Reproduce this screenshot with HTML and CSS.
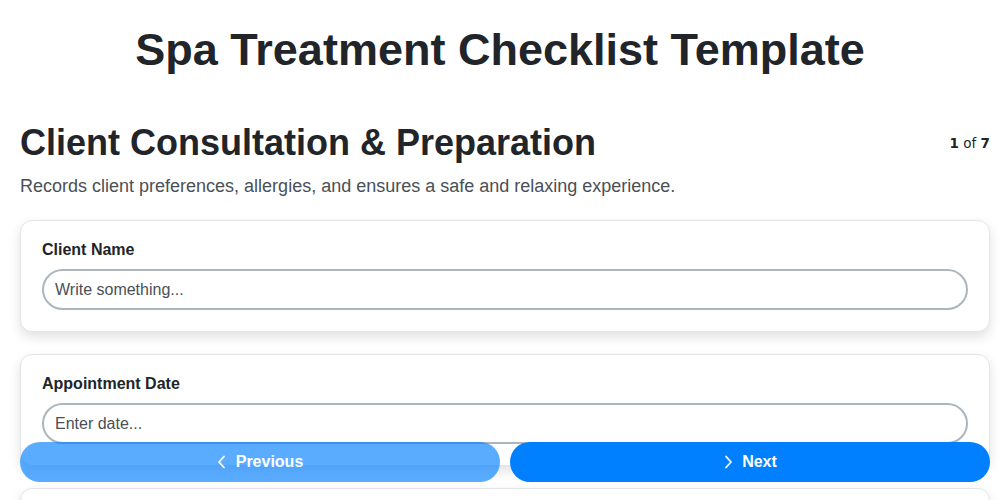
FILE: index.html
```html
<!DOCTYPE html>
<html lang="en">
<head>
<meta charset="utf-8">
<title>Spa Treatment Checklist Template</title>
<link rel="stylesheet" href="styles.css">
</head>
<body>
<h1 class="title">Spa Treatment Checklist Template</h1>
<div class="page">
  <div class="section-head">
    <h2 class="section-title">Client Consultation &amp; Preparation</h2>
    <div class="counter"><b>1</b> of <b>7</b></div>
  </div>
  <p class="desc">Records client preferences, allergies, and ensures a safe and relaxing experience.</p>
  <div class="cards">
    <div class="card">
      <label class="label">Client Name</label>
      <input class="input" type="text" placeholder="Write something...">
    </div>
    <div class="card">
      <label class="label">Appointment Date</label>
      <input class="input" type="text" placeholder="Enter date...">
    </div>
    <div class="card">
      <label class="label">Treatment Type</label>
      <input class="input" type="text" placeholder="Write something...">
    </div>
  </div>
</div>
<div class="nav">
  <button class="btn btn-prev"><svg class="chev" width="10" height="14" viewBox="0 0 10 14"><polyline points="7,1.5 2,7 7,12.5" fill="none" stroke="#fff" stroke-width="1.8" stroke-linecap="round" stroke-linejoin="round"/></svg>Previous</button>
  <button class="btn btn-next"><svg class="chev" width="10" height="14" viewBox="0 0 10 14"><polyline points="3,1.5 8,7 3,12.5" fill="none" stroke="#fff" stroke-width="1.8" stroke-linecap="round" stroke-linejoin="round"/></svg>Next</button>
</div>
</body>
</html>
```

FILE: styles.css
```css
* { box-sizing: border-box; }
html, body { margin: 0; padding: 0; background: #fff; }
body {
  font-family: "Liberation Sans", Arial, sans-serif;
  color: #212529;
  overflow: hidden;
}
.page {
  padding: 0 10px 0 20px;
}
.title {
  margin: 0;
  padding-top: 23px;
  text-align: center;
  font-size: 45px;
  font-weight: 700;
  line-height: 54px;
  color: #212529;
}
.section-head {
  display: flex;
  justify-content: space-between;
  align-items: center;
  margin-top: 44px;
}
.section-title {
  margin: 0;
  font-size: 36px;
  font-weight: 700;
  line-height: 44px;
  color: #212529;
}
.counter {
  font-family: "DejaVu Sans", sans-serif;
  font-size: 13.5px;
  color: #212529;
}
.desc {
  margin: 9px 0 0;
  font-size: 18px;
  line-height: 24px;
  color: #495057;
}
.cards {
  margin-top: 22px;
  display: flex;
  flex-direction: column;
  gap: 22px;
}
.card {
  background: #fff;
  border: 1px solid #e3e5e8;
  border-radius: 12px;
  box-shadow: 0 5px 12px rgba(0, 0, 0, 0.12);
  padding: 19px 21px 21px;
  display: flex;
  flex-direction: column;
}
.label {
  font-size: 16px;
  font-weight: 700;
  line-height: 19px;
  color: #212529;
  margin-bottom: 10px;
}
.input {
  height: 41px;
  border: 2px solid #adb5bd;
  border-radius: 21px;
  padding: 0 11px;
  font-family: "Liberation Sans", Arial, sans-serif;
  font-size: 16px;
  color: #495057;
  background: #fff;
  outline: none;
}
.input::placeholder { color: #495057; opacity: 1; }
.nav {
  position: fixed;
  left: 20px;
  right: 10px;
  bottom: 18px;
  display: flex;
  gap: 10px;
}
.btn {
  flex: 1;
  height: 40px;
  border: none;
  border-radius: 20px;
  background: #0080ff;
  color: #fff;
  font-family: "Liberation Sans", Arial, sans-serif;
  font-size: 16px;
  font-weight: 700;
  display: flex;
  align-items: center;
  justify-content: center;
  gap: 9px;
  cursor: pointer;
}
.btn-prev { opacity: 0.65; }
.chev { display: block; }
```
